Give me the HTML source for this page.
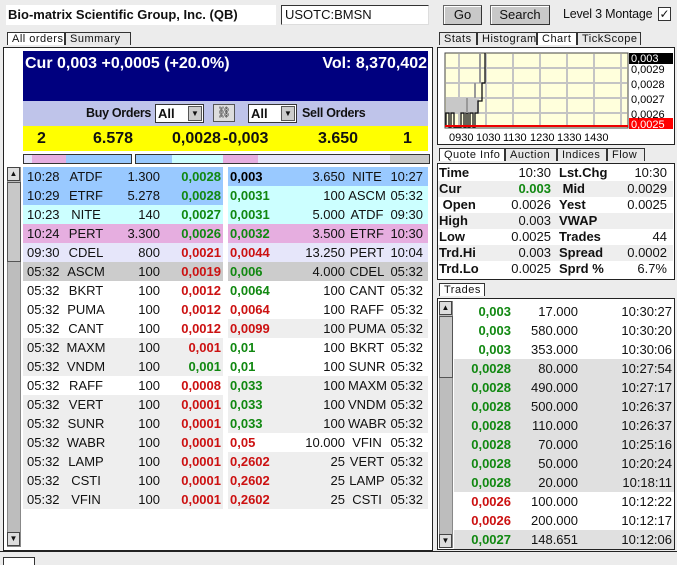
<!DOCTYPE html>
<html><head><meta charset="utf-8"><style>
*{margin:0;padding:0;box-sizing:border-box}
body{width:677px;height:563px;background:#ececec;font-family:"Liberation Sans",sans-serif;font-size:13px;position:relative;overflow:hidden;color:#111}
.a{position:absolute}
.btn{position:absolute;background:#c8c8c8;border:1px solid #666;border-right-color:#333;border-bottom-color:#333;box-shadow:inset 1px 1px 0 #fff;text-align:center;font-size:13px;line-height:17px}
.tab{position:absolute;height:13px;font-size:11px;line-height:12px;background:#e8e8e8;border:1px solid #333;border-bottom:none;padding-left:4px;letter-spacing:.5px}
.tab.s{background:#fff}
.row{position:absolute;height:19px;line-height:19px;white-space:nowrap}
.row span{position:absolute}
.g{color:#118811;font-weight:bold}.r{color:#cc1111;font-weight:bold}.k{font-weight:bold;color:#000}
.sb{position:absolute;background:#bdbdbd;border:1px solid #888}
.arr{position:absolute;width:13px;height:14px;background:#ddd;border:1px solid #444;font-size:8px;text-align:center;line-height:12px}
.q{position:absolute;left:438px;width:235px;height:16px;line-height:16px;font-size:13px}
.q span{position:absolute}
.q b{position:absolute}
</style></head><body>
<div class="a" style="left:6px;top:5px;width:270px;height:20px;background:#fff;font-weight:bold;font-size:13px;line-height:20px;padding-left:2px">Bio-matrix Scientific Group, Inc. (QB)</div>
<div class="a" style="left:281px;top:5px;width:148px;height:20px;background:#fff;border:1px solid #333;border-right-color:#ddd;border-bottom-color:#ddd;line-height:18px;padding-left:3px">USOTC:BMSN</div>
<div class="btn" style="left:443px;top:5px;width:39px;height:20px">Go</div>
<div class="btn" style="left:490px;top:5px;width:60px;height:20px">Search</div>
<div class="a" style="left:563px;top:7px;font-size:12.5px;letter-spacing:-.2px">Level 3 Montage</div>
<div class="a" style="left:658px;top:7px;width:13px;height:14px;background:#fff;border:1px solid #333;font-size:12px;line-height:12px;text-align:center">✓</div>

<div class="tab s" style="left:7px;top:32px;width:58px">All orders</div>
<div class="tab" style="left:65px;top:32px;width:66px">Summary</div>
<div class="a" style="left:3px;top:47px;width:430px;height:504px;background:#fff;border:1px solid #222"></div>
<div class="a" style="left:23px;top:51px;width:405px;height:50px;background:#00007f;color:#fff;font-weight:bold;font-size:16px;padding:4px 2px">Cur 0,003 +0,0005 (+20.0%)<span style="position:absolute;right:1px;top:4px">Vol: 8,370,402</span></div>
<div class="a" style="left:23px;top:101px;width:405px;height:25px;background:#bfc4ea"></div>
<div class="a" style="left:86px;top:106px;font-weight:bold;font-size:12.5px;letter-spacing:-.3px">Buy Orders</div>
<div class="a" style="left:155px;top:104px;width:49px;height:19px;background:#fff;border:1px solid #333;font-weight:bold;padding-left:2px;line-height:17px">All<span style="position:absolute;right:1px;top:1px;width:14px;height:15px;background:#ccc;border:1px solid #555;font-size:8px;text-align:center;line-height:14px">▼</span></div>
<div class="a" style="left:213px;top:104px;width:22px;height:18px;background:#ddd;border:1px solid #555;font-size:11px;text-align:center;line-height:16px">⛓</div>
<div class="a" style="left:248px;top:104px;width:49px;height:19px;background:#fff;border:1px solid #333;font-weight:bold;padding-left:2px;line-height:17px">All<span style="position:absolute;right:1px;top:1px;width:14px;height:15px;background:#ccc;border:1px solid #555;font-size:8px;text-align:center;line-height:14px">▼</span></div>
<div class="a" style="left:302px;top:106px;font-weight:bold;font-size:12.5px;letter-spacing:-.3px">Sell Orders</div>
<div class="a" style="left:23px;top:126px;width:405px;height:25px;background:#ffff00;font-size:16px;font-weight:bold;line-height:25px">
<span class="a" style="left:14px">2</span><span class="a" style="left:70px">6.578</span><span class="a" style="left:149px">0,0028</span><span class="a" style="left:200px">-0,003</span><span class="a" style="left:295px">3.650</span><span class="a" style="left:380px">1</span></div>
<div class="a" style="left:23px;top:154px;width:109px;height:10px;border:1px solid #333;background:linear-gradient(90deg,#e6e6fa 0 8px,#e6aee0 8px 42px,#99c9ff 42px)"></div>
<div class="a" style="left:135px;top:154px;width:295px;height:10px;border:1px solid #333;background:linear-gradient(90deg,#99c9ff 0 36px,#ccffff 36px 87px,#e6aee0 87px 122px,#e6e6fa 122px 254px,#c8c8c8 254px)"></div>

<div class="sb" style="left:7px;top:167px;width:14px;height:380px"></div>
<div class="arr" style="left:7px;top:167px">▲</div>
<div class="sb" style="left:7px;top:182px;width:14px;height:80px;background:#c8c8c8;border-color:#555"></div>
<div class="arr" style="left:7px;top:532px">▼</div>

<div id="L"></div>
<div class="tab" style="left:439px;top:32px;width:38px">Stats</div>
<div class="tab" style="left:477px;top:32px;width:60px">Histogram</div>
<div class="tab s" style="left:537px;top:32px;width:40px">Chart</div>
<div class="tab" style="left:577px;top:32px;width:64px">TickScope</div>
<div class="a" style="left:437px;top:47px;width:238px;height:98px;background:#fff;border:1px solid #222"></div>
<svg class="a" style="left:437px;top:47px" width="238" height="98">
<rect x="8" y="6" width="183" height="75" fill="#ffffdc" stroke="#444"/>
<g stroke="#c4c4c4" stroke-width="2"><line x1="22" y1="7" x2="22" y2="80"/><line x1="49" y1="7" x2="49" y2="80"/><line x1="76" y1="7" x2="76" y2="80"/><line x1="103" y1="7" x2="103" y2="80"/><line x1="130" y1="7" x2="130" y2="80"/><line x1="157" y1="7" x2="157" y2="80"/><line x1="184" y1="7" x2="184" y2="80"/>
<line x1="9" y1="21" x2="190" y2="21"/><line x1="9" y1="36" x2="190" y2="36"/><line x1="9" y1="51" x2="190" y2="51"/><line x1="9" y1="66" x2="190" y2="66"/></g>
<rect x="9" y="50" width="33" height="15" fill="#c8c8c8"/>
<path d="M9 80V66H12V80H14V66H17V80H24V66H27V80H29V66H31V80H33V66H36V80H38V66H41V54H45V36H48V6" fill="none" stroke="#111" stroke-width="1.3"/>
<path d="M30 51V66M38 36V51M43 6V36" stroke="#999" stroke-width="2"/>
<line x1="8" y1="79" x2="191" y2="79" stroke="#e00" stroke-width="2"/>
<rect x="192" y="6" width="44" height="11" fill="#000"/><rect x="192" y="71" width="44" height="11" fill="#f00"/>
<g font-family="Liberation Sans" font-size="11"><text x="194" y="15" fill="#fff">0,003</text><text x="194" y="26">0,0029</text><text x="194" y="41">0,0028</text><text x="194" y="56">0,0027</text><text x="194" y="71">0,0026</text><text x="194" y="81" fill="#fff">0,0025</text>
<text x="12" y="94">0930</text><text x="39" y="94">1030</text><text x="66" y="94">1130</text><text x="93" y="94">1230</text><text x="120" y="94">1330</text><text x="147" y="94">1430</text></g>
</svg>
<div class="tab s" style="left:439px;top:148px;width:66px">Quote Info</div>
<div class="tab" style="left:505px;top:148px;width:52px">Auction</div>
<div class="tab" style="left:557px;top:148px;width:50px">Indices</div>
<div class="tab" style="left:607px;top:148px;width:38px">Flow</div>
<div class="a" style="left:437px;top:163px;width:238px;height:117px;background:#fff;border:1px solid #222"></div>
<div id="Q"></div>
<div class="tab s" style="left:439px;top:283px;width:46px">Trades</div>
<div class="a" style="left:437px;top:298px;width:238px;height:252px;background:#fff;border:1px solid #222"></div>
<div class="sb" style="left:439px;top:301px;width:14px;height:247px"></div>
<div class="arr" style="left:439px;top:301px">▲</div>
<div class="sb" style="left:439px;top:316px;width:14px;height:62px;background:#c8c8c8;border-color:#555"></div>
<div class="arr" style="left:439px;top:534px">▼</div>
<div id="T"></div>
<div class="a" style="left:0;top:551px;width:677px;height:1px;background:#222"></div>
<div class="tab s" style="left:3px;top:557px;width:32px;height:8px"></div>
<script>
var L=[["10:28","ATDF","1.300","0,0028","g","0,003","k","3.650","NITE","10:27","#99c9ff","#99c9ff"],
["10:29","ETRF","5.278","0,0028","g","0,0031","g","100","ASCM","05:32","#99c9ff","#ccffff"],
["10:23","NITE","140","0,0027","g","0,0031","g","5.000","ATDF","09:30","#ccffff","#ccffff"],
["10:24","PERT","3.300","0,0026","g","0,0032","g","3.500","ETRF","10:30","#e6aee0","#e6aee0"],
["09:30","CDEL","800","0,0021","r","0,0044","r","13.250","PERT","10:04","#e6e6fa","#e6e6fa"],
["05:32","ASCM","100","0,0019","r","0,006","g","4.000","CDEL","05:32","#cccccc","#cccccc"],
["05:32","BKRT","100","0,0012","r","0,0064","g","100","CANT","05:32","#fff","#fff"],
["05:32","PUMA","100","0,0012","r","0,0064","r","100","RAFF","05:32","#fff","#fff"],
["05:32","CANT","100","0,0012","r","0,0099","r","100","PUMA","05:32","#fff","#eee"],
["05:32","MAXM","100","0,001","r","0,01","g","100","BKRT","05:32","#eee","#fff"],
["05:32","VNDM","100","0,001","g","0,01","g","100","SUNR","05:32","#eee","#fff"],
["05:32","RAFF","100","0,0008","r","0,033","g","100","MAXM","05:32","#fff","#eee"],
["05:32","VERT","100","0,0001","r","0,033","g","100","VNDM","05:32","#eee","#eee"],
["05:32","SUNR","100","0,0001","r","0,033","g","100","WABR","05:32","#eee","#eee"],
["05:32","WABR","100","0,0001","r","0,05","r","10.000","VFIN","05:32","#eee","#fff"],
["05:32","LAMP","100","0,0001","r","0,2602","r","25","VERT","05:32","#eee","#eee"],
["05:32","CSTI","100","0,0001","r","0,2602","r","25","LAMP","05:32","#eee","#eee"],
["05:32","VFIN","100","0,0001","r","0,2602","r","25","CSTI","05:32","#eee","#eee"]];
var h="";L.forEach(function(r,i){var y=167+i*19;
h+='<div class="row" style="left:23px;top:'+y+'px;width:200px;background:'+r[10]+'"><span style="left:4px">'+r[0]+'</span><span style="left:43px;width:40px;text-align:center">'+r[1]+'</span><span style="right:63px">'+r[2]+'</span><span class="'+r[4]+'" style="right:2px">'+r[3]+'</span></div>';
h+='<div class="row" style="left:228px;top:'+y+'px;width:200px;background:'+r[11]+'"><span class="'+r[6]+'" style="left:2px">'+r[5]+'</span><span style="right:83px">'+r[7]+'</span><span style="left:120px;width:38px;text-align:center">'+r[8]+'</span><span style="right:5px">'+r[9]+'</span></div>';});
document.getElementById("L").innerHTML=h;
var Q=[["Time","10:30","Lst.Chg","10:30"],["Cur","0.003","&nbsp;Mid","0.0029"],["&nbsp;Open","0.0026","Yest","0.0025"],["High","0.003","VWAP",""],["Low","0.0025","Trades","44"],["Trd.Hi","0.003","Spread","0.0002"],["Trd.Lo","0.0025","Sprd %","6.7%"]];
h="";Q.forEach(function(r,i){h+='<div class="q" style="top:'+(165+i*16)+'px;background:'+(i%2?'#eee':'#fff')+'"><b style="left:1px">'+r[0]+'</b><span style="right:122px'+(i==1?';color:#118811;font-weight:bold':'')+'">'+r[1]+'</span><b style="left:121px">'+r[2]+'</b><span style="right:6px">'+r[3]+'</span></div>';});
document.getElementById("Q").innerHTML=h;
var T=[["0,003","17.000","10:30:27","g",0],["0,003","580.000","10:30:20","g",0],["0,003","353.000","10:30:06","g",0],["0,0028","80.000","10:27:54","g",1],["0,0028","490.000","10:27:17","g",1],["0,0028","500.000","10:26:37","g",1],["0,0028","110.000","10:26:37","g",1],["0,0028","70.000","10:25:16","g",1],["0,0028","50.000","10:20:24","g",1],["0,0028","20.000","10:18:11","g",1],["0,0026","100.000","10:12:22","r",0],["0,0026","200.000","10:12:17","r",0],["0,0027","148.651","10:12:06","g",1]];
h="";T.forEach(function(r,i){h+='<div class="row" style="left:454px;top:'+(302+i*19)+'px;width:220px;background:'+(r[4]?'#e0e0e0':'#fff')+'"><span class="'+r[3]+'" style="right:163px">'+r[0]+'</span><span style="right:96px">'+r[1]+'</span><span style="right:2px">'+r[2]+'</span></div>';});
document.getElementById("T").innerHTML=h;
</script>
</body></html>
